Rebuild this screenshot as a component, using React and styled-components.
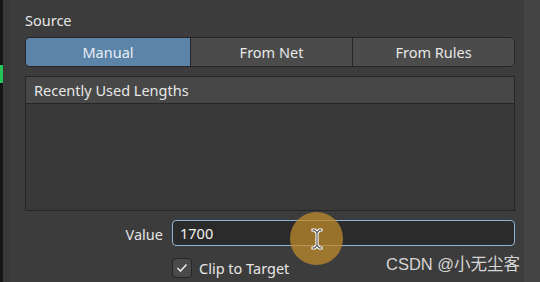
import React from 'react';
import styled, { createGlobalStyle } from 'styled-components';

const Global = createGlobalStyle`
  html, body { margin: 0; padding: 0; background: #3d3d3d; }
  body { font-family: "Noto Sans", "Open Sans", sans-serif; }
`;

const Screen = styled.div`
  position: relative;
  display: flex;
  width: 540px;
  height: 282px;
  overflow: hidden;
  background: #3d3d3d;
`;

const LeftEdge = styled.div`
  width: 3px;
  background: #161616;
  display: flex;
  flex-direction: column;
  padding-top: 65px;
  & > div {
    height: 18px;
    background: #23c35a;
  }
`;

const Gutter = styled.div`
  width: 6px;
  background: #383838;
`;

const Panel = styled.div`
  flex: 1;
  display: flex;
  flex-direction: column;
  padding: 10px 9px 0 16px;
  background: #3c3c3c;
`;

const RightStrip = styled.div`
  width: 16px;
  background: #444444;
`;

const SectionTitle = styled.div`
  color: #e6e6e6;
  font-size: 14.5px;
  line-height: 20px;
  height: 27px;
`;

const Segmented = styled.div`
  display: grid;
  grid-template-columns: 164px 1fr 1fr;
  height: 28px;
  border: 1px solid #262626;
  border-radius: 5px;
  overflow: hidden;
  background: #262626;
  gap: 1px;
`;

const Segment = styled.div`
  display: flex;
  align-items: center;
  justify-content: center;
  font-size: 14.5px;
  color: ${p => (p.$active ? '#e8eef5' : '#e8e8e8')};
  background: ${p => (p.$active ? '#5c84a8' : '#4b4b4b')};
`;

const ListBox = styled.div`
  margin-top: 9px;
  height: 133px;
  border: 1px solid #262626;
  display: flex;
  flex-direction: column;
  background: #383838;
`;

const ListHeader = styled.div`
  height: 26px;
  display: flex;
  align-items: center;
  padding-left: 8px;
  font-size: 14.5px;
  color: #e6e6e6;
  background: #474747;
  border-bottom: 1px solid #262626;
`;

const FormGrid = styled.div`
  margin-top: 9px;
  display: grid;
  grid-template-columns: 138px 1fr;
  column-gap: 9px;
  row-gap: 12px;
  align-items: center;
`;

const Label = styled.div`
  text-align: right;
  font-size: 14.5px;
  color: #e4e4e4;
  padding-top: 2px;
`;

const Input = styled.div`
  height: 24px;
  border: 1px solid #8fb4d6;
  border-radius: 4px;
  background: #2b2b2b;
  display: flex;
  align-items: center;
  padding-left: 7px;
  font-size: 14.5px;
  color: #f2f2f2;
`;

const CheckRow = styled.div`
  display: flex;
  align-items: center;
  gap: 7px;
  font-size: 14.5px;
  color: #e6e6e6;
`;

const Box = styled.div`
  width: 18px;
  height: 18px;
  border: 1px solid #262626;
  border-radius: 4px;
  background: #4a4a4a;
  display: flex;
  align-items: center;
  justify-content: center;
`;

const Halo = styled.div`
  position: absolute;
  left: 290px;
  top: 212px;
  width: 53px;
  height: 53px;
  border-radius: 50%;
  background: rgba(190, 138, 44, 0.75);
  display: flex;
  align-items: center;
  justify-content: center;
`;

const Watermark = styled.div`
  position: absolute;
  left: 386px;
  top: 251px;
  font-family: "Liberation Sans", "Noto Sans CJK SC", sans-serif;
  font-size: 16.5px;
  color: #d6d6d6;
`;

const IBeam = () => (
  <svg width="14" height="24" viewBox="0 0 14 24">
    <path
      d="M2 2h3l2 2 2-2h3v2h-2l-2 2v12l2 2h2v2H9l-2-2-2 2H2v-2h2l2-2V6L4 4H2z"
      fill="#111"
      stroke="#fff"
      strokeWidth="1.2"
      strokeLinejoin="round"
    />
  </svg>
);

const Check = () => (
  <svg width="12" height="10" viewBox="0 0 12 10">
    <path d="M1.5 5l3 3 6-6.5" fill="none" stroke="#e6e6e6" strokeWidth="1.6" />
  </svg>
);

export default function App() {
  return (
    <Screen>
      <Global />
      <LeftEdge><div /></LeftEdge>
      <Gutter />
      <Panel>
        <SectionTitle>Source</SectionTitle>
        <Segmented>
          <Segment $active>Manual</Segment>
          <Segment>From Net</Segment>
          <Segment>From Rules</Segment>
        </Segmented>
        <ListBox>
          <ListHeader>Recently Used Lengths</ListHeader>
        </ListBox>
        <FormGrid>
          <Label>Value</Label>
          <Input>1700</Input>
          <div />
          <CheckRow>
            <Box><Check /></Box>
            Clip to Target
          </CheckRow>
        </FormGrid>
      </Panel>
      <RightStrip />
      <Halo><IBeam /></Halo>
      <Watermark>CSDN @小无尘客</Watermark>
    </Screen>
  );
}
